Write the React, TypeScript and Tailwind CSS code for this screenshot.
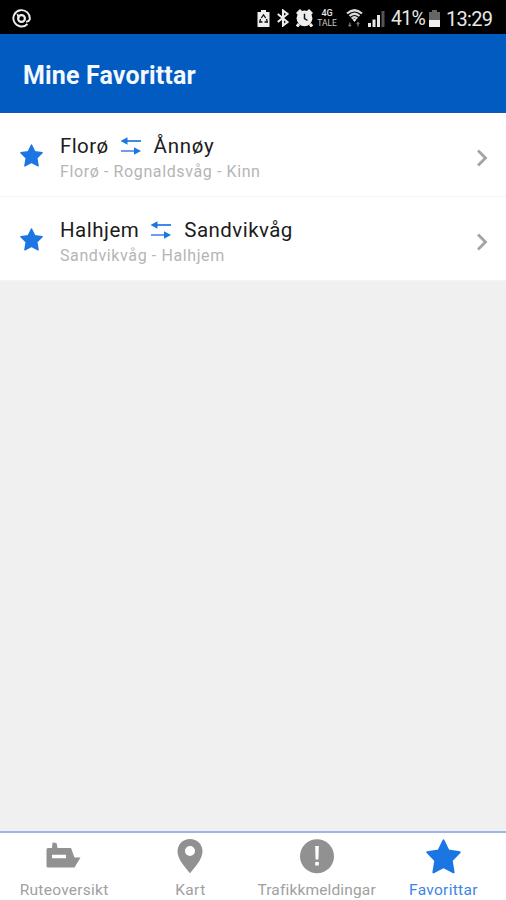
import React from 'react';

const BODY = "font-['Roboto','Liberation_Sans',sans-serif]";

function Star({ className }: { className: string }) {
  return (
    <svg className={className} viewBox="0 0 34 34" fill="#1b76e3" stroke="#1b76e3" strokeWidth="2" strokeLinejoin="round">
      <path d="M17 1.400 L21.800 11.300 L32.700 12.900 L24.900 20.800 L26.800 32.400 L17 27.300 L7.200 32.400 L9.100 20.800 L1.300 12.900 L12.200 11.300 Z" />
    </svg>
  );
}

function SwapArrows() {
  return (
    <svg className="h-[18px] w-[22px]" viewBox="0 0 22 18">
      <path d="M5 4H21" stroke="#2a7ee8" strokeWidth="1.8" />
      <path d="M.5 4L7.500 .3V7.700Z" fill="#1b76e3" />
      <path d="M1 14H17" stroke="#5c93ee" strokeWidth="1.8" />
      <path d="M21 14L14 10.300V17.700Z" fill="#1b76e3" />
    </svg>
  );
}

interface RouteProps {
  from: string;
  to: string;
  via: string;
  fromClass: string;
  toClass: string;
  viaClass: string;
}

function RouteRow({ from, to, via, fromClass, toClass, viaClass }: RouteProps) {
  return (
    <li className="flex h-[84px] items-center border-b border-[#f4f4f4] bg-white pl-5 pr-[17px]">
      <Star className="mt-[2px] h-[23px] w-[23px] shrink-0" />
      <div className="ml-[17px] flex-1 whitespace-nowrap pt-[6px]">
        <div className="flex h-[26px] items-center text-[20.5px] leading-[26px] text-[#1c1c1c]">
          <span className={fromClass}>{from}</span>
          <span className="ml-[11px] mr-[12px]"><SwapArrows /></span>
          <span className={toClass}>{to}</span>
        </div>
        <div className={`h-[24px] pt-px text-[16px] leading-[24px] text-[#b5b5b5] ${viaClass}`}>{via}</div>
      </div>
      <svg className="mt-[6px] h-[18px] w-[14px]" viewBox="0 0 14 18" fill="none" stroke="#a3a3a3" strokeWidth="2.8">
        <path d="M3 1.500L10.500 9L3 16.500" />
      </svg>
    </li>
  );
}

function StatusBar() {
  return (
    <div className="flex h-[34px] items-center bg-black pt-[2px] text-[#e8e8e8]">
      <svg className="ml-[12px] h-[19px] w-[19px]" viewBox="0 0 19 19" fill="none" stroke="#eee">
        <path d="M15.500 15A8.200 8.200 0 1 1 17.700 10.500Q16.500 13 14 12.500" strokeWidth="1.900" />
        <circle cx="9.500" cy="9.500" r="3.400" strokeWidth="2.200" />
        <path d="M5.400 5L7 9.500" strokeWidth="1.700" />
      </svg>
      <svg className="ml-[226px] h-[17px] w-[13px]" viewBox="0 0 13 17">
        <path d="M4 0H9V2H12.500V17H.5V2H4Z" fill="#eee" />
        <path d="M4.300 8L6.500 4.800L8.700 8M9.500 9L10.300 12H7.500M5.500 12H2.700L3.600 9" stroke="#111" strokeWidth="1.300" fill="none" />
      </svg>
      <svg className="ml-[7px] h-[18px] w-[12px]" viewBox="0 0 12 18" fill="none" stroke="#eee" strokeWidth="2.100">
        <path d="M.8 5L10.500 13L6 16.500V1.500L10.500 5L.8 13" />
      </svg>
      <svg className="ml-[7px] h-[18px] w-[17px]" viewBox="0 0 17 18">
        <path d="M1 5L5 1M16 5L12 1M3 15L1 17.500M14 15L16 17.500" stroke="#eee" strokeWidth="3" />
        <circle cx="8.500" cy="9.300" r="7.900" fill="#eee" />
        <path d="M8.500 4.800V9.500L11.500 11.500" stroke="#111" strokeWidth="1.500" fill="none" />
      </svg>
      <div className="ml-[4px] flex w-[20px] flex-col items-center text-[9px] leading-[11px]">
        <span className="font-medium">4G</span>
        <span className="-mt-px text-[8.500px] leading-[11px] text-[#c8c8c8]">TALE</span>
      </div>
      <svg className="ml-[9px] h-[18px] w-[17px]" viewBox="0 0 17 18" fill="none" stroke="#ddd">
        <path d="M1 4.500Q8.500-2 16 4.500M3.500 7Q8.500 2.500 13.500 7M5.700 9.500Q8.500 7 11.300 9.500" strokeWidth="2.200" />
        <path d="M7 10.500H10L8.500 12.500Z" fill="#eee" />
        <path d="M3.800 13.500V17M2.500 15.800L3.800 17.200L5.100 15.800M12 17.500V13.500M10.700 15L12 13.500L13.300 15" stroke="#777" strokeWidth="1.200" />
      </svg>
      <svg className="ml-[5px] h-[17px] w-[17px]" viewBox="0 0 17 17">
        <path d="M0 13H3V17H0ZM4.500 9.500H7.500V17H4.500ZM9 5H12V17H9Z" fill="#e8e8e8" />
        <path d="M13.500 1H16.500V17H13.500Z" fill="#555" />
      </svg>
      <span className="ml-[6px] mt-px w-[34px] whitespace-nowrap text-[19.500px] leading-[24px] tracking-[-0.700px]">41%</span>
      <svg className="ml-[4px] h-[17px] w-[11px]" viewBox="0 0 11 17">
        <path d="M3 0H8V2H11V10H0V2H3Z" fill="#666" />
        <path d="M0 10H11V17H0Z" fill="#f0f0f0" />
      </svg>
      <span className="ml-[6px] mt-px whitespace-nowrap text-[20px] leading-[24px] tracking-[-0.700px]">13:29</span>
    </div>
  );
}

function FerryIcon() {
  return (
    <svg className="h-[36px] w-[36px]" viewBox="1 0 36 36">
      <path fillRule="evenodd" d="M7.500 3.500L11.500 4L12.500 9H26L29.500 18.500H35.500L29.500 28.500H3Q1.500 28.500 1.500 27V10.500Q1.500 9 3 9H7Z M7 15.800V19.300H21V15.800Z" fill="#919191" />
    </svg>
  );
}

function PinIcon() {
  return (
    <svg className="h-[36px] w-[36px]" viewBox="0 0 36 36">
      <path fillRule="evenodd" d="M18 0C11 0 5.500 5.200 5.500 12.300C5.500 21 14 29 18 34.300C22 29 30.500 21 30.500 12.300C30.500 5.200 25 0 18 0ZM18 7A5 5 0 1 1 18 17A5 5 0 0 1 18 7Z" fill="#919191" />
    </svg>
  );
}

function AlertIcon() {
  return (
    <svg className="h-[36px] w-[36px]" viewBox="0 0 36 36">
      <circle cx="18" cy="17.200" r="17" fill="#919191" />
      <path d="M16.200 7H19.800L19.400 20.500H16.600ZM16.200 23H19.800V26.500H16.200Z" fill="white" />
    </svg>
  );
}

function Tab({ icon, label, className }: { icon: React.ReactNode; label: string; className: string }) {
  return (
    <div className="flex flex-1 basis-0 flex-col items-center pt-[6px]">
      <div className="flex h-[36px] items-start">{icon}</div>
      <span className={`mt-[5px] whitespace-nowrap text-[15.500px] leading-[20px] ${className}`}>{label}</span>
    </div>
  );
}

export default function App() {
  return (
    <div className={`flex h-[900px] w-[506px] flex-col overflow-hidden bg-[#f0f0f0] ${BODY}`}>
      <StatusBar />
      <header className="flex h-[79px] items-center border-b border-[#1b4fbd] bg-[#025bc1] pl-[23px] pt-[6px]">
        <h1 className="whitespace-nowrap text-[25px] font-bold leading-[30px] tracking-[0.150px] text-[#f4f8ff]">Mine Favorittar</h1>
      </header>
      <ul>
        <RouteRow from="Florø" to="Ånnøy" via="Florø - Rognaldsvåg - Kinn" fromClass="tracking-[0.400px]" toClass="tracking-[0.700px]" viaClass="tracking-[0.610px]" />
        <RouteRow from="Halhjem" to="Sandvikvåg" via="Sandvikvåg - Halhjem" fromClass="tracking-[0.500px]" toClass="tracking-[0.450px]" viaClass="tracking-[0.610px]" />
      </ul>
      <nav className="mt-auto flex h-[69px] border-t-2 border-[#9cb6ea] bg-white pl-px">
        <Tab icon={<FerryIcon />} label="Ruteoversikt" className="tracking-[0.250px] text-[#a0a0a0]" />
        <Tab icon={<PinIcon />} label="Kart" className="tracking-[0.400px] text-[#a0a0a0]" />
        <Tab icon={<AlertIcon />} label="Trafikkmeldingar" className="tracking-[0.150px] text-[#a0a0a0]" />
        <Tab icon={<Star className="ml-px h-[35px] w-[35px]" />} label="Favorittar" className="pl-px tracking-[0.300px] text-[#3c85e6]" />
      </nav>
    </div>
  );
}
